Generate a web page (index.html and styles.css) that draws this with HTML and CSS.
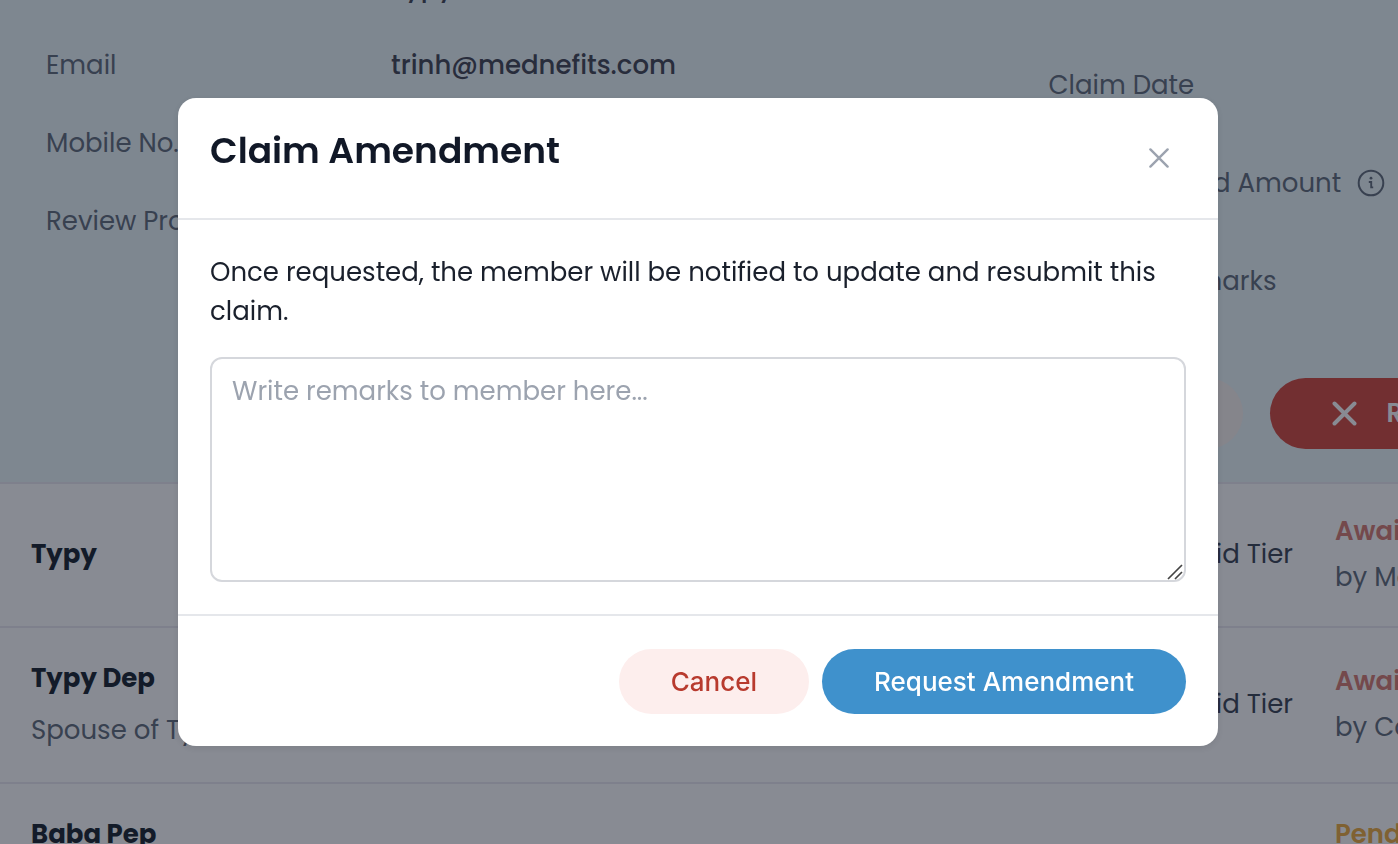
FILE: index.html
```html
<!DOCTYPE html>
<html lang="en">
<head>
    <meta charset="UTF-8">
    <meta name="viewport" content="width=device-width, initial-scale=1.0">
    <title>Claim Amendment</title>
    <link rel="stylesheet" href="styles.css">
</head>
<body>
    <main class="page">
        <section class="claim">
            <dl class="member-info">
                <dt>Name</dt>
                <dd>Typy</dd>
                <dt>Email</dt>
                <dd>trinh@mednefits.com</dd>
                <dt>Mobile No.</dt>
                <dd></dd>
                <dt>Review Process</dt>
                <dd></dd>
            </dl>
            <div class="claim-info">
                <div class="claim-row">Claim Date</div>
                <div class="claim-row claim-amount">
                    <span>Total Claimed Amount</span>
                    <svg class="info-icon" viewBox="0 0 28 28" fill="none" stroke="currentColor" stroke-width="2">
                        <circle cx="14" cy="14" r="12.3"/>
                        <path d="M11.8 13h2.4v5.4h2" stroke-width="1.9"/>
                        <circle cx="14" cy="9.2" r="1.4" fill="currentColor" stroke="none"/>
                    </svg>
                </div>
                <div class="claim-row claim-remarks">Remarks</div>
                <div class="claim-actions">
                    <button type="button" class="btn-amend">Amend</button>
                    <button type="button" class="btn-reject">
                        <svg class="reject-icon" viewBox="0 0 24 24" fill="none" stroke="currentColor" stroke-width="3.8" stroke-linecap="round">
                            <path d="M2.4 2.4l19.2 19.2M21.6 2.4L2.4 21.6"/>
                        </svg>
                        Reject
                    </button>
                </div>
            </div>
        </section>
        <table class="members">
            <tbody>
                <tr>
                    <td class="member"><strong>Typy</strong></td>
                    <td class="tier">Mid Tier</td>
                    <td class="status"><b>Awaiting</b><span>by Member</span></td>
                </tr>
                <tr>
                    <td class="member"><strong>Typy Dep</strong><span>Spouse of Typy</span></td>
                    <td class="tier">Mid Tier</td>
                    <td class="status"><b>Awaiting</b><span>by Company</span></td>
                </tr>
                <tr>
                    <td class="member"><strong>Baba Pep</strong></td>
                    <td class="tier"></td>
                    <td class="status pending"><b>Pending</b></td>
                </tr>
            </tbody>
        </table>
    </main>

    <div class="overlay">
        <div class="modal" role="dialog" aria-modal="true" aria-labelledby="modal-title">
            <div class="modal-header">
                <h1 id="modal-title">Claim Amendment</h1>
                <button type="button" class="btn-close" aria-label="Close">
                    <svg viewBox="0 0 20 20" fill="none" stroke="currentColor" stroke-width="2.4" stroke-linecap="round">
                        <path d="M1.4 1.4l17.2 17.2M18.6 1.4L1.4 18.6"/>
                    </svg>
                </button>
            </div>
            <div class="modal-body">
                <label for="remarks">Once requested, the member will be notified to update and resubmit this claim.</label>
                <div class="remarks-box">
                    <textarea id="remarks" placeholder="Write remarks to member here..."></textarea>
                    <svg class="grip" viewBox="0 0 16 16" fill="none" stroke="#444" stroke-width="1.7">
                        <path d="M1 15L15 1M8 15l7-7"/>
                    </svg>
                </div>
            </div>
            <div class="modal-footer">
                <button type="button" class="btn btn-cancel">Cancel</button>
                <button type="button" class="btn btn-request">Request Amendment</button>
            </div>
        </div>
    </div>
</body>
</html>
```

FILE: styles.css
```css
* {
    box-sizing: border-box;
}
body {
    margin: 0;
    height: 100vh;
    overflow: hidden;
    font-family: Poppins, Inter, sans-serif;
    font-size: 26px;
    color: #5f6a78;
}
button, textarea {
    font-family: inherit;
    font-size: inherit;
}
button {
    border: none;
    cursor: pointer;
}

/* claim page behind the modal, scrolled down a little */
.page {
    margin-top: -52px;
    white-space: nowrap;
}
.claim {
    display: flex;
    background-color: #ebf6f9;
    border-bottom: 2px solid #ebe9f0;
}
.member-info {
    flex: 0 0 75%;
    display: grid;
    grid-template-columns: 345px 1fr;
    align-content: start;
    margin: 0;
    padding-left: 46px;
    line-height: 78px;
}
.member-info dd {
    margin: 0;
    font-weight: 500;
    color: #3f4250;
}
.claim-info {
    padding: 88px 0 33px;
}
.claim-row {
    height: 98px;
    line-height: 98px;
}
.claim-amount {
    display: flex;
    align-items: center;
    gap: 16px;
}
.claim-amount span {
    width: 292px;
    text-align: right;
}
.info-icon {
    width: 28px;
    height: 28px;
}
.claim-remarks {
    width: 228px;
    text-align: right;
}
.claim-actions {
    display: flex;
    gap: 27px;
    margin-top: 48px;
}
.btn-amend, .btn-reject {
    height: 71px;
    border-radius: 36px;
    font-weight: 600;
}
.btn-amend {
    width: 194px;
    background-color: #f9f2ee;
    color: #d3463b;
}
.btn-reject {
    display: flex;
    align-items: center;
    gap: 30px;
    padding: 0 62px;
    background-color: #d3463b;
    color: #fff;
}
.reject-icon {
    width: 25px;
    height: 25px;
}
.members {
    width: 100%;
    table-layout: fixed;
    border-spacing: 0;
    background-color: #fff;
}
.members td {
    padding: 24px 0 26px;
    border-bottom: 2px solid #ebe9f0;
    line-height: 52px;
}
.members strong, .members b, .members td span {
    display: block;
}
.members .member {
    padding-left: 31px;
}
.member strong {
    font-weight: 700;
    color: #151e2a;
}
.members .tier {
    padding-right: 42px;
    text-align: right;
    color: #374151;
}
.members .status {
    width: 63px;
    line-height: 46px;
}
.status b {
    font-weight: 600;
    color: #d77a71;
}
.pending b {
    line-height: 52px;
    color: #edaa3d;
}

.overlay {
    position: fixed;
    inset: 0;
    display: flex;
    justify-content: center;
    align-items: center;
    padding-right: 2px;
    background-color: rgba(17, 24, 39, 0.5);
}
.modal {
    width: 90%;
    max-width: 1040px;
    border-radius: 18px;
    background-color: #fff;
    color: #1a202c;
    box-shadow: 0 2px 6px rgba(0, 0, 0, 0.08);
}
.modal-header {
    display: flex;
    justify-content: space-between;
    height: 122px;
    padding: 32px;
    border-bottom: 2px solid #e5e7eb;
}
.modal-header h1 {
    margin: 0;
    font-size: 36px;
    line-height: 42px;
    font-weight: 600;
    color: #111827;
}
.btn-close {
    width: 54px;
    height: 56px;
    padding: 0;
    background: none;
    color: #9ca3af;
}
.btn-close svg {
    display: block;
    width: 20px;
    height: 20px;
    margin: auto;
}
.modal-body {
    padding: 33px 32px 32px;
}
.modal-body label {
    display: block;
    margin-bottom: 26px;
    line-height: 39px;
}
.remarks-box {
    position: relative;
}
.remarks-box textarea {
    display: block;
    width: 100%;
    height: 225px;
    padding: 13px 20px;
    border: 2px solid #d5d7dc;
    border-radius: 12px;
    line-height: 39px;
    color: #1a202c;
    resize: none;
}
.remarks-box textarea::placeholder {
    color: #9ca3af;
}
.grip {
    position: absolute;
    right: 3px;
    bottom: 2px;
    width: 16px;
    height: 16px;
}
.modal-footer {
    display: flex;
    justify-content: flex-end;
    gap: 13px;
    padding: 33px 32px 32px;
    border-top: 2px solid #e5e7eb;
}
.btn {
    height: 65px;
    padding: 0 52px;
    border-radius: 33px;
    font-family: Inter, sans-serif;
    font-weight: 500;
}
.btn-cancel {
    background-color: #fdeeed;
    color: #b83a2e;
}
.btn-request {
    background-color: #3f91cc;
    color: #fff;
}
```
